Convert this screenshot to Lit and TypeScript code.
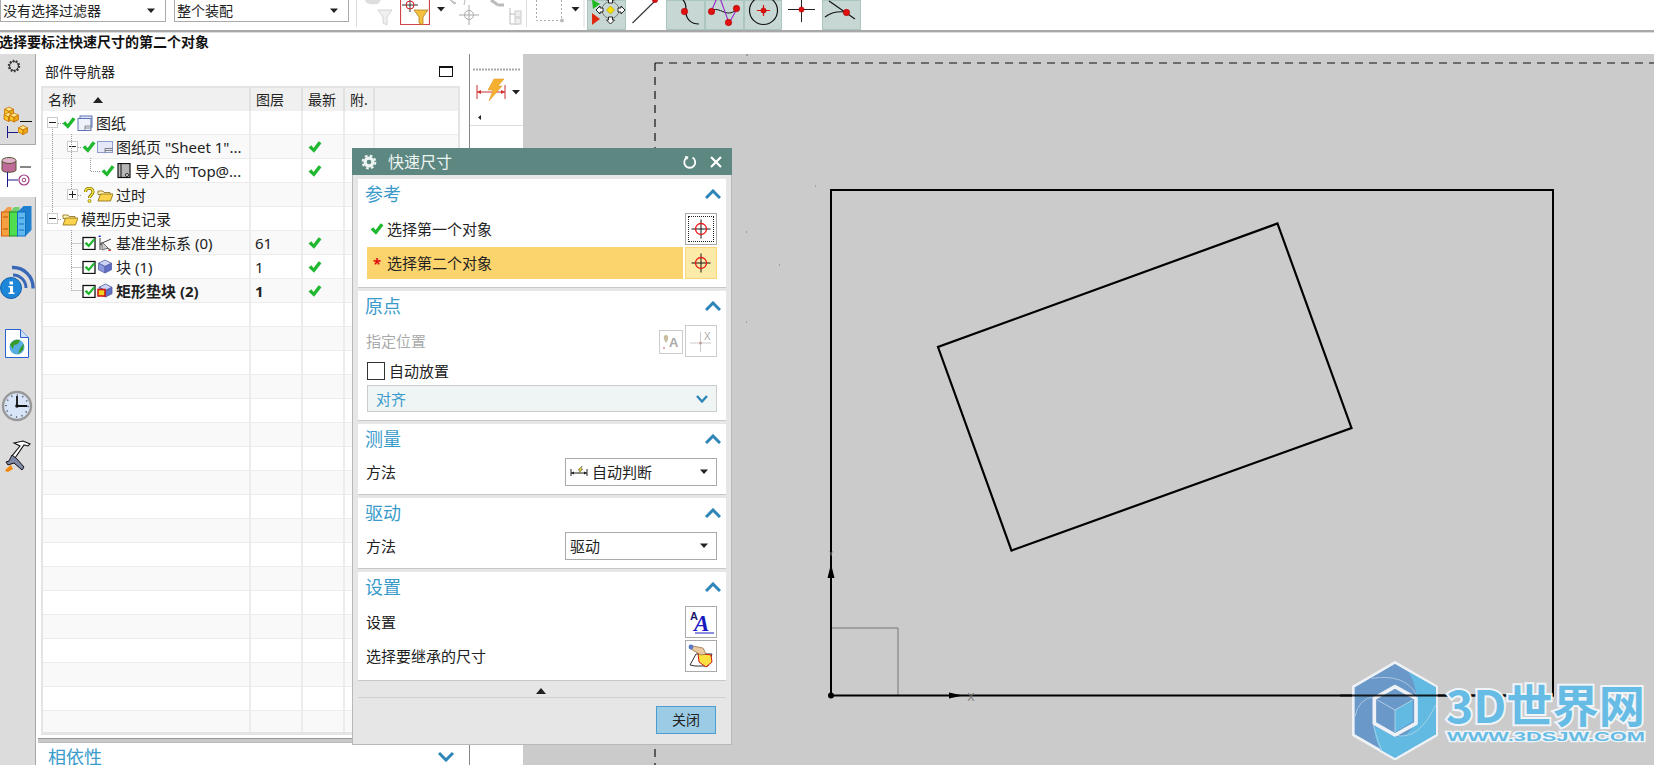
import { LitElement, html, css, svg } from "lit";
import { customElement } from "lit/decorators.js";

const seg = (x0: number, x1: number, content: unknown, on = false) => html`<svg class=${on ? "seg on" : "seg"} width=${x1 - x0} height="30" viewBox="${x0} 0 ${x1 - x0} 30">${content}</svg>`;
const vseg = (y0: number, y1: number, content: unknown) => html`<svg class="vseg" width="35" height=${y1 - y0} viewBox="0 ${y0} 35 ${y1 - y0}">${content}</svg>`;

const tri = (x: number, y: number) => svg`<path d="M${x - 4} ${y - 2}h8l-4 4.500z" fill="#222"/>`;
const dot = (x: number, y: number, r = 3.2) => svg`<circle cx=${x} cy=${y} r=${r} fill="#e01010" stroke="#a00" stroke-width=".6"/>`;
const funnel = (x: number, y: number, a: string, b: string) => svg`<path d="M${x - 7} ${y}h14l-5 7v8l-4-2v-6z" fill=${a} stroke=${b} stroke-width=".8"/>`;
const cube = (x: number, y: number, s: number, t: string, l: string, r: string, e: string) => svg`<g stroke=${e} stroke-width=".8" stroke-linejoin="round"><path d="M${x} ${y - s}l${s} ${s / 2}l${-s} ${s / 2}l${-s} ${-s / 2}z" fill=${t}/><path d="M${x - s} ${y - s / 2}l${s} ${s / 2}v${s}l${-s} ${-s / 2}z" fill=${l}/><path d="M${x + s} ${y - s / 2}l${-s} ${s / 2}v${s}l${s} ${-s / 2}z" fill=${r}/></g>`;
const moveArrow = (x: number, y: number, rot: number) => svg`<path transform="translate(${x} ${y}) rotate(${rot})" d="M0 -5l4 4h-2v3h-4v-3h-2z" fill="#fff" stroke="#111" stroke-width=".9"/>`;

const checkPath = "M.5 7.500l2.800-2.200 2.300 2.700L10.700 1.200 13.500 3.200 6 12.800z";
const checkMark = html`<svg class="g14" width="14" height="14" viewBox="0 0 14 14"><path d=${checkPath} fill="#1fb82f"/></svg>`;
const checkbox = html`<svg class="g14" width="14" height="14" viewBox="0 0 14 14"><rect x="1" y="1.500" width="12" height="12" fill="#fff" stroke="#111" stroke-width="1.300"/><path d="M2.500 7.500l2.200-1.600 2 2.300L11.500 2.500l1.800 1.300-6.500 7.700z" fill="#1fb82f"/></svg>`;
const question = html`<svg class="g14" width="14" height="16" viewBox="0 0 14 16"><path d="M3.500 5c0-5 7.500-5 7.500 0 0 3-3.500 3-3.500 6" fill="none" stroke="#7a6a00" stroke-width="3"/><path d="M3.500 5c0-5 7.500-5 7.500 0 0 3-3.500 3-3.500 6" fill="none" stroke="#f4e23a" stroke-width="1.600"/><circle cx="7.500" cy="14" r="1.600" fill="#f4e23a" stroke="#7a6a00" stroke-width=".6"/></svg>`;
const drawingIcon = html`<svg class="g16" width="16" height="16" viewBox="0 0 16 16"><rect x="3" y="1" width="12" height="11" fill="#dfe5f5" stroke="#5f74b8"/><rect x="1" y="3.500" width="13" height="12" fill="#eef1fa" stroke="#5f74b8"/><path d="M8 15v-4h6M8 13h6" stroke="#777" fill="none" stroke-width=".8"/></svg>`;
const sheetIcon = html`<svg class="g16" width="16" height="16" viewBox="0 0 16 16"><rect x=".5" y="2.500" width="15" height="11" fill="#e5e9f7" stroke="#8d9ccb"/><path d="M8 13.500v-4h7.500M8 11.500h7.500" stroke="#666" fill="none" stroke-width=".8"/></svg>`;
const viewIcon = html`<svg class="g16" width="16" height="16" viewBox="0 0 16 16"><rect x="2" y=".5" width="12" height="14" fill="#b5b5b5" stroke="#111" stroke-width="1.200"/><path d="M5 .5v14" stroke="#111"/><circle cx="11" cy="12" r="1.500" fill="#fff" stroke="#222"/></svg>`;
const folder = html`<svg class="g16" width="16" height="16" viewBox="0 0 16 16"><path d="M1 4h5l1 1.500h6v2H1z" fill="#fff3b0" stroke="#8a6a10" stroke-width=".8"/><path d="M1 14l2.500-7H16l-2.500 7z" fill="#fbd34d" stroke="#8a6a10" stroke-width=".8"/></svg>`;
const csysIcon = html`<svg class="g16" width="16" height="16" viewBox="0 0 16 16"><path d="M3 15V3M3 9l11-5M3 9l11 6" stroke="#444" fill="none"/><path d="M5 7l6 6-6 2z" fill="#ccc" stroke="#555" stroke-width=".8"/><path d="M1 2l2-2 1 2z" fill="#22c"/><path d="M11 15l3 1" stroke="#d22"/></svg>`;
const blockIcon = html`<svg class="g16" width="16" height="16" viewBox="0 0 16 16">${cube(8, 7.500, 6.500, "#cdd4f5", "#8d9ae0", "#5f6fc8", "#5560a0")}</svg>`;
const padIcon = html`<svg class="g16" width="16" height="16" viewBox="0 0 16 16">${cube(8.500, 7.500, 6.500, "#cdd4f5", "#8d9ae0", "#5f6fc8", "#5560a0")}<rect x="1" y="6.500" width="7" height="6.500" fill="#f0d020" stroke="#d01010" stroke-width="1.500"/></svg>`;

const chevUp = html`<svg class="chev" width="16" height="10" viewBox="0 0 16 10"><path d="M1 9L8 2l7 7" fill="none" stroke="#2e86b8" stroke-width="3"/></svg>`;
const chevDown = html`<svg class="chev" width="16" height="10" viewBox="0 0 16 10"><path d="M1 1l7 7 7-7" fill="none" stroke="#2e86b8" stroke-width="3"/></svg>`;
const chevSmall = html`<svg class="chev" width="12" height="8" viewBox="0 0 12 8"><path d="M1 1l5 5.500L11 1" fill="none" stroke="#2e86b8" stroke-width="2.400"/></svg>`;
const target = html`<svg width="22" height="22" viewBox="0 0 22 22"><path d="M1.500 11h19M11 1.500v19" stroke="#111" stroke-width="1"/><circle cx="11" cy="11" r="5.500" fill="none" stroke="#ea1515" stroke-width="1.300"/></svg>`;
const drop = html`<svg class="drop" width="8" height="6" viewBox="0 0 8 6"><path d="M0 .5h8L4 5z" fill="#222"/></svg>`;
const dimIcon = html`<svg width="18" height="14" viewBox="0 0 18 14"><path d="M1 4v7M17 4v7M1 8h16" stroke="#222"/><path d="M1 8l3-1.500v3zM17 8l-3-1.500v3z" fill="#222"/><path d="M8 9l2-4H8l4-4-1 3h2l-5 5z" fill="#e8d020" stroke="#555" stroke-width=".5"/></svg>`;

const rows = [
  { pl: 4, box: "-", marks: [checkMark, drawingIcon], label: "图纸" },
  { pl: 24, box: "-", marks: [checkMark, sheetIcon], label: '图纸页 "Sheet 1"...', fresh: true },
  { pl: 58, marks: [checkMark, viewIcon], label: '导入的 "Top@...', fresh: true },
  { pl: 24, box: "+", marks: [question, folder], label: "过时" },
  { pl: 4, box: "-", marks: [folder], label: "模型历史记录" },
  { pl: 39, marks: [checkbox, csysIcon], label: "基准坐标系 (0)", layer: "61", fresh: true },
  { pl: 39, marks: [checkbox, blockIcon], label: "块 (1)", layer: "1", fresh: true },
  { pl: 39, marks: [checkbox, padIcon], label: "矩形垫块 (2)", layer: "1", fresh: true, bold: true },
];
const blanks = Array.from({ length: 18 });

@customElement("app-root")
export class AppRoot extends LitElement {
  static styles = css`
    :host { display: block; position: relative; width: 1654px; height: 765px; overflow: hidden; background: #fff; color: #222;
      font-family: "Noto Sans", "Noto Sans CJK SC", sans-serif; font-size: 15px; line-height: 20px; }
    svg { display: block; flex: none; }
    .toolbar { display: flex; height: 30px; border-bottom: 2px solid #a8a8a8; box-shadow: 0 1px 0 #ddd; }
    .picker { width: 166px; height: 22px; box-sizing: border-box; border: 1px solid #aaa; border-top: 0; display: flex; align-items: center; justify-content: space-between; padding: 0 10px 0 2px; font-size: 14px; }
    .picker + .picker { width: 175px; margin: 0 7px 0 8px; }
    .seg.on { background: #c7d8d4; box-shadow: inset 0 0 0 1px #aac6bf; }
    .status { height: 22px; font-size: 14px; line-height: 20px; font-weight: 700; white-space: nowrap; text-indent: -1px; color: #111; }
    .main { display: flex; height: 711px; }
    .tabs { width: 35px; flex: none; background: #dcdcdc; border-right: 1px solid #a8a8a8; display: flex; flex-direction: column; }
    .tab0 { border-bottom: 1px solid #aaa; }
    .tab1 { background: #fff; margin-right: -1px; }
    .nav { width: 433px; flex: none; display: flex; flex-direction: column; border-right: 1px solid #888; overflow: hidden; }
    .navhead { height: 32px; flex: none; display: flex; align-items: center; justify-content: space-between; padding: 3px 16px 0 9px; box-sizing: border-box; font-size: 14px; }
    .maxi { width: 14px; height: 11px; border: 1px solid #111; border-top-width: 2px; box-sizing: border-box; }
    .table { position: relative; flex: none; margin: 0 9px 0 5px; border: 2px solid #e4e4e4; border-bottom-width: 3px; height: 649px; overflow: hidden; box-sizing: border-box; }
    .lines { position: absolute; left: 0; top: 0; pointer-events: none; }
    .row { display: grid; grid-template-columns: 208px 52px 42px 30px 1fr; height: 24px; box-sizing: border-box; border-bottom: 1px solid #ececec; }
    .row:nth-child(odd) { background: #f9f9f9; }
    .row.head { background: #f0f0f0; border-bottom: 0; font-size: 14px; height: 23px; }
    .row > div { border-right: 2px solid #ececec; display: flex; align-items: center; white-space: nowrap; overflow: hidden; }
    .row.head > div { border-right-color: #e0e0e0; padding-left: 5px; }
    .row > div:last-child { border-right: 0; }
    .row.bold { font-weight: 700; }
    .layer { padding-left: 4px; }
    .fresh { padding-left: 5px; }
    .sort { margin-left: 17px; }
    .box { width: 11px; height: 11px; box-sizing: border-box; border: 1px solid #ccc; background: #fff; position: relative; margin-right: 4px; flex: none; }
    .box::before { content: ""; position: absolute; left: 1px; right: 1px; top: 4px; height: 1px; background: #222; }
    .box.plus::after { content: ""; position: absolute; top: 1px; bottom: 1px; left: 4px; width: 1px; background: #222; }
    .g14 { margin-right: 1px; }
    .g16 { margin-right: 3px; }
    .splitter { height: 5px; flex: none; margin-left: 2px; background: #c8c8c8; border-top: 1px solid #999; border-bottom: 1px solid #bbb; box-sizing: border-box; margin-top: 3px; }
    .deps { display: flex; flex: none; justify-content: space-between; align-items: center; padding: 0 15px 0 12px; font-size: 18px; color: #3a9bcb; height: 28px; }
    .mini { width: 53px; flex: none; height: 72px; border-bottom: 1px solid #ddd; box-sizing: border-box; padding: 14px 3px 0; }
    .canvas { flex: 1; background: #cbcbcb; }
    .dialog { position: absolute; left: 352px; top: 148px; width: 380px; height: 597px; box-sizing: border-box; background: #e6e6e6; border: 1px solid #b8b8b8; border-top: 0; display: flex; flex-direction: column; }
    .title { height: 27px; flex: none; margin: 0 -1px; background: #5d8781; color: #eef4f2; display: flex; align-items: center; font-size: 16px; padding: 0 9px; gap: 11px; }
    .title span { flex: 1; }
    .body { display: flex; flex-direction: column; gap: 3px; padding: 4px 5px 0 5px; }
    .sec { background: #fff; border-bottom: 1px solid #c8c8c8; padding: 0 9px; display: flex; flex-direction: column; }
    .sh { height: 34px; flex: none; display: flex; align-items: center; justify-content: space-between; font-size: 18px; color: #3a9bcb; padding: 0 0 4px; box-sizing: border-box; margin-left: -2px; }
    .sh .chev { margin-right: -4px; }
    .line { display: flex; align-items: center; justify-content: space-between; height: 32px; flex: none; }
    .line + .line { margin-top: 2px; }
    .line > span { margin-left: -1px; }
    .lab { display: flex; align-items: center; }
    .sel { width: 32px; height: 32px; box-sizing: border-box; border: 1px solid #aaa; display: flex; align-items: center; justify-content: center; background: #fff; flex: none; }
    .sel.focus { position: relative; }
    .sel.focus::after { content: ""; position: absolute; inset: 2px; border: 1px dotted #222; }
    .pick { background: #fcd46e; padding-right: 2px; height: 32px; }
    .pick .lab { flex: 1; height: 32px; }
    .pick .sel { margin-right: -2px; background: #fbeaa8; border-color: #fbd678; box-shadow: -2px 0 0 #fff; }
    .star { color: #e01010; width: 20px; text-align: center; font-weight: 700; }
    .tick { width: 20px; display: flex; justify-content: center; }
    .dim { color: #aaa; }
    .btns { display: flex; gap: 2px; align-items: flex-end; }
    .sel.faint { border-color: #ccc; }
    .sel.small { width: 24px; height: 24px; margin-bottom: 3px; }
    .auto { display: flex; align-items: center; gap: 4px; height: 18px; margin-top: 5px; font-size: 15px; }
    .cb { width: 18px; height: 18px; border: 1px solid #333; box-sizing: border-box; }
    .align { height: 27px; margin: 5px 0 8px; border: 1px solid #ccc; background: #eff5f5; color: #3a9bcb; display: flex; align-items: center; justify-content: space-between; padding: 0 8px; box-sizing: border-box; flex: none; }
    .meas { height: 28px; margin-bottom: 8px; }
    .combo { width: 152px; height: 28px; border: 1px solid #aaa; box-sizing: border-box; display: flex; align-items: center; gap: 4px; padding: 0 8px 0 4px; }
    .combo span { flex: 1; }
    .last { margin-bottom: 8px; }
    .more { height: 17px; display: flex; align-items: center; justify-content: center; margin: 0 5px; border-bottom: 1px solid #d0d0d0; flex: none; padding: 3px 2px 0 0; box-sizing: border-box; }
    .foot { display: flex; justify-content: flex-end; padding: 8px 15px 0; }
    .close { width: 60px; height: 28px; box-sizing: border-box; background: #9ccbe5; border: 1px solid #4b9cd0; display: flex; align-items: center; justify-content: center; font-size: 14px; }
  `;

  private gear(c: string, hole: string) {
    return html`<svg width="16" height="16" viewBox="0 0 16 16"><circle cx="8" cy="8" r="6.400" fill="none" stroke=${c} stroke-width="2" stroke-dasharray="2.700 2.330"/><circle cx="8" cy="8" r="5.500" fill=${c}/><circle cx="8" cy="8" r="2.300" fill=${hole}/></svg>`;
  }

  private toolbar() {
    return html`<div class="toolbar">
      <div class="picker">没有选择过滤器${drop}</div>
      <div class="picker">整个装配${drop}</div>
      ${seg(356, 400, svg`<path d="M356.500 0v27" stroke="#ddd"/><path d="M365 0c1 4 5 5 13 4l3-4z" fill="#dedede"/>${funnel(385, 10, "#f0f0f0", "#ccc")}`)}
      ${seg(400, 430, svg`<path d="M400.500 0v24.500h29V0" fill="#fff" stroke="#d2434a" stroke-width="1.200"/><path d="M402 5h16M410 0v12" stroke="#333"/><circle cx="410" cy="5" r="4" fill="none" stroke="#d02020"/>${funnel(421, 10, "#f4c040", "#b08020")}`)}
      ${seg(430, 526, svg`${tri(441, 9)}<path d="M450 0l6 3-2 1zM465 0l-1 5" stroke="#bbb" fill="#ccc"/><path d="M459 15h20M469 5v20" stroke="#aaa"/><circle cx="469" cy="15" r="4.500" fill="none" stroke="#aaa"/><path d="M491 0l7 5M498 5l6 0" stroke="#bbb" stroke-width="3"/><path d="M510 8v16h8M510 14h5" stroke="#bbb" fill="none"/><rect x="515" y="11" width="6" height="6" fill="#eee" stroke="#ccc"/><rect x="515" y="18" width="6" height="6" fill="#eee" stroke="#ccc"/>`)}
      ${seg(526, 587, svg`<path d="M526.500 0v27M584 0v27" stroke="#ddd"/><path d="M536.500 0v20.500h25V0" fill="none" stroke="#aaa" stroke-dasharray="2 2"/><circle cx="562" cy="20.500" r="2" fill="#bbb"/>${tri(575.500, 9)}`)}
      ${seg(587, 626, svg`<path d="M592 0h1l7 4-7 5z" fill="#22b822"/><path d="M592 13l8 6-8 6z" fill="#e02a10"/><circle cx="610.500" cy="10" r="8.500" fill="none" stroke="#777"/>${moveArrow(610.500, 1, 0)}${moveArrow(610.500, 19, 180)}${moveArrow(601, 10, 270)}${moveArrow(620, 10, 90)}<path d="M610.500 6l4 4-4 4-4-4z" fill="#f6e000" stroke="#b09000" stroke-width=".6"/>`, true)}
      ${seg(626, 666, svg`<path d="M632.500 23L655 1" stroke="#333" stroke-width="1.100"/>${dot(655, 0, 2.600)}`)}
      ${seg(666, 705, svg`<path d="M683 0c2 2 3 5 3 9v3c0 7 5 12 13 12" fill="none" stroke="#111" stroke-width="1.200"/>${dot(684.500, 11.500)}`, true)}
      ${seg(705, 744, svg`<path d="M711 11c4-3 8-1 13 1s9 1 13-3" fill="none" stroke="#111"/><path d="M711 12l6-14h3l9 25 8-14" fill="none" stroke="#9a28c8" stroke-width="1.100"/>${dot(711.500, 11.500)}${dot(736.500, 8.500)}${dot(728.500, 22.500)}`, true)}
      ${seg(744, 782, svg`<circle cx="763.500" cy="10.500" r="14" fill="none" stroke="#111" stroke-width="1.200"/><path d="M757 10.500h13M763.500 5v11" stroke="#e01010" stroke-width="1.200"/>${dot(763.500, 10.500, 2.600)}`, true)}
      ${seg(782, 822, svg`<path d="M788 9.500h27M801.500 0v22" stroke="#222"/>${dot(801.500, 9.500, 2.600)}`)}
      ${seg(822, 861, svg`<path d="M829 1l26 18" stroke="#111" stroke-width="1.100" fill="none"/><path d="M825 17c5-4 12-6 21-5" fill="none" stroke="#111" stroke-width="1.100"/>${dot(846.500, 12.500)}`, true)}
    </div>`;
  }

  private tabs() {
    const y = ["#fde68a", "#f6c828", "#e8a818", "#c87000"] as const;
    return html`<div class="tabs">
      <div class="tab0">${vseg(54, 90, svg`<g transform="translate(6 58)"><circle cx="8" cy="8" r="5" fill="none" stroke="#333" stroke-width="2.400" stroke-dasharray="1.600 1.500"/><circle cx="8" cy="8" r="4.500" fill="none" stroke="#333" stroke-width="1"/></g>`)}${vseg(90, 144, svg`${cube(9, 111.500, 4.500, ...y)}${cube(8.500, 117, 4.500, ...y)}${cube(14, 117.500, 4.500, ...y)}${cube(23, 130, 4.500, ...y)}<path d="M20 121.500h12" stroke="#111"/><path d="M7.500 126v12M7.500 132.500H18" stroke="#1a1a8c" fill="none"/>`)}</div>
      <div class="tab1">${vseg(145, 197, svg`<path d="M2 161v9c0 3 14 3 14 0v-9" fill="#c06a9a" stroke="#553"/><ellipse cx="9" cy="160.500" rx="7" ry="3" fill="#e0b0cc" stroke="#553"/><path d="M20 167h11" stroke="#111"/><path d="M7.500 172v15M7.500 180H18" stroke="#1a1a8c" fill="none"/><circle cx="24" cy="180" r="5" fill="#fff" stroke="#9a3a80" stroke-width="1.200"/><circle cx="24" cy="180" r="1.800" fill="none" stroke="#9a3a80"/>`)}</div>
      ${vseg(198, 260, svg`<path d="M1.500 214l6-6h4v5z" fill="#f0a050"/><rect x="1.500" y="213" width="8" height="24" fill="#f5a040" stroke="#d06010"/><path d="M3 218h5M3 230h5" stroke="#c05010"/><path d="M9.500 213l5-5h5v5z" fill="#70d070"/><rect x="9.500" y="213" width="8" height="24" fill="#50dd50" stroke="#209020"/><path d="M17.500 213l6-6h8v24l-6 6z" fill="#2080d0"/><rect x="17.500" y="213" width="8" height="24" fill="#60b8f0" stroke="#1070c0"/><path d="M19 219h5M19 225h5M19 231h5" stroke="#1070c0"/>`)}
      ${vseg(260, 323, svg`<path d="M12 268.500a20 20 0 0 1 21 21" fill="none" stroke="#3a68b8" stroke-width="3.400"/><path d="M13 276a13 13 0 0 1 13 13" fill="none" stroke="#3a68b8" stroke-width="3"/><circle cx="11" cy="289" r="10.500" fill="#1d86d8" stroke="#1460a8"/><path d="M8.500 287h4.500v6.500h1.500v1.500h-6v-1.500h1.500v-5h-1.500z" fill="#fff"/><rect x="9.500" y="282.500" width="3.500" height="3" fill="#fff"/>`)}
      ${vseg(323, 384, svg`<path d="M5.500 330.500h15l8 8v20h-23z" fill="#fff" stroke="#2a62d0"/><path d="M20.500 330.500v8h8" fill="#cfe0fa" stroke="#2a62d0"/><circle cx="17" cy="348" r="7.500" fill="#58aee0"/><path d="M10 346c2-5 7-6 10-5l-2 4-4 1-1 4zM24 345l-1 6-5 4c1-4 3-8 6-10z" fill="#3a9a28"/>`)}
      ${vseg(384, 434, svg`<circle cx="17" cy="407" r="14" fill="#d8e4f8" stroke="#999" stroke-width="2.400"/><path d="M17 407v-10M17 407h10" stroke="#111" stroke-width="1.800"/><circle cx="17" cy="407" r="1.800" fill="#111"/><circle cx="17" cy="407" r="11" fill="none" stroke="#556" stroke-width="1.600" stroke-dasharray="1.200 4.500"/>`)}
      ${vseg(434, 480, svg`<path d="M14 444l9-2 7 3-2 2-4-1-9 13-3-2 8-10z" fill="#fff" stroke="#111" stroke-width="1.100"/><path d="M12 456l5 4 7 8-2 3-8-7-6 2-2-3 3-1z" fill="#8088a8" stroke="#111"/><path d="M5 472c1-3 4-4 6-6l2 4-5 3z" fill="#f58a10"/>`)}
    </div>`;
  }

  private tree() {
    return html`<div class="table">
      <div class="row head"><div>名称<svg class="sort" width="10" height="6" viewBox="0 0 10 6"><path d="M0 6h10L5 0z" fill="#222"/></svg></div><div>图层</div><div>最新</div><div>附.</div><div></div></div>
      ${rows.map((r) => html`<div class="row ${r.bold ? "bold" : ""}">
        <div style="padding-left:${r.pl}px">${r.box ? html`<span class="box ${r.box === "+" ? "plus" : ""}"></span>` : ""}${r.marks}${r.label}</div>
        <div class="layer">${r.layer ?? ""}</div><div class="fresh">${r.fresh ? checkMark : ""}</div><div></div><div></div></div>`)}
      ${blanks.map(() => html`<div class="row"><div></div><div></div><div></div><div></div><div></div></div>`)}
      <svg class="lines" width="414" height="300" viewBox="43 88 414 300"><g stroke="#999" stroke-dasharray="1 1" fill="none"><path d="M52.500 129v84M58 123.500h5M58 219.500h4"/><path d="M71.500 134v56M78 147.500h4M78 195.500h4M90.500 158v13.500H101"/><path d="M71.500 230v60.500M71.500 243.500H82M71.500 267.500H82M71.500 290.500H82"/></g></svg>
    </div>`;
  }

  private canvas() {
    return html`<div class="canvas"><svg width="1131" height="711" viewBox="523 54 1131 711">
      <path d="M655 63H1654M655 63V765" stroke="#111" stroke-width="1.200" stroke-dasharray="8 6" fill="none"/>
      <path d="M747 54v2M746 232h1M779 265h1M815 186h1M746 322h1" stroke="#777"/>
      <path d="M831 628h67v67.500" fill="none" stroke="#777" stroke-width="1"/>
      <path d="M831 695.500V190H1553V695.500H831" fill="none" stroke="#000" stroke-width="2"/>
      <path d="M1277.500 223.500L1351.500 428 1011.500 550.500 938 347z" fill="none" stroke="#000" stroke-width="2.200"/>
      <path d="M831 564l-3.500 14h7zM949 692.500l14 3-14 3z" fill="#000"/><circle cx="831" cy="695.500" r="3" fill="#000"/>
      <text x="971" y="701" font-family="Liberation Sans" font-size="11" fill="#777" text-anchor="middle">X</text>
      <text x="831" y="556" font-family="Liberation Sans" font-size="7" fill="#888" text-anchor="middle">Y</text>
      <g transform="translate(1345 655) scale(.3333)">
        <path d="M150 22L275 95V240L150 312 25 240V95z" fill="#6a98c8" stroke="#eef2f6" stroke-width="8" stroke-linejoin="round"/>
        <path d="M190 50L273 97V238L150 309 106 284Q88 250 86 212L150 245Q205 245 215 180 222 100 190 50z" fill="#62b9e2"/>
        <path d="M80 70Q180 55 215 120M30 185Q40 130 90 125M85 210Q100 265 110 285M150 240Q220 260 272 150" fill="none" stroke="#c9dcec" stroke-width="2"/>
        <path d="M150 95L213 130V205L150 240 88 205V130z" fill="#6a98c8" stroke="#eef2f6" stroke-width="11" stroke-linejoin="round"/>
        <path d="M150 165L203 135V200L150 232z" fill="#62b9e2"/>
        <path d="M97 135L150 165 203 135M150 165V232" fill="none" stroke="#d5e2ee" stroke-width="2"/>
      </g>
      <path d="M1340 695.500H1553V650" fill="none" stroke="#000" stroke-width="2" opacity=".85"/>
      <text x="1446" y="723" font-family="Noto Sans CJK SC, sans-serif" font-weight="700" font-size="45" fill="#66bce4" stroke="#f0f4f8" stroke-width="4" paint-order="stroke" textLength="199" lengthAdjust="spacingAndGlyphs">3D世界网</text>
      <text x="1447" y="741" font-family="Liberation Sans, sans-serif" font-weight="700" font-size="12" fill="#66bce4" stroke="#f0f4f8" stroke-width="2.400" paint-order="stroke" textLength="198" lengthAdjust="spacingAndGlyphs">WWW.3DSJW.COM</text>
    </svg></div>`;
  }

  private dialog() {
    return html`<div class="dialog">
      <div class="title">${this.gear("#eef4f2", "#5d8781")}<span>快速尺寸</span>
        <svg width="16" height="16" viewBox="0 0 16 16"><path d="M5 3.500a5.500 5.500 0 1 0 5.500 0" fill="none" stroke="#fff" stroke-width="1.800"/><path d="M2.500 2l4 .5-1.500 3.500z" fill="#fff"/></svg>
        <svg width="14" height="14" viewBox="0 0 14 14"><path d="M2 2l10 10M12 2L2 12" stroke="#fff" stroke-width="2.200"/></svg></div>
      <div class="body">
        <div class="sec s1">
          <div class="sh">参考${chevUp}</div>
          <div class="line"><div class="lab"><span class="tick">${checkMark}</span>选择第一个对象</div><div class="sel focus">${target}</div></div>
          <div class="line pick"><div class="lab"><span class="star">*</span>选择第二个对象</div><div class="sel">${target}</div></div>
          <div class="last"></div>
        </div>
        <div class="sec">
          <div class="sh">原点${chevUp}</div>
          <div class="line"><span class="dim">指定位置</span><div class="btns">
            <div class="sel faint small"><svg width="20" height="18" viewBox="0 0 20 18"><text x="8" y="14" font-family="Liberation Sans" font-weight="700" font-size="13" fill="#aaa">A</text><path d="M5 2c-3 0-3 4 0 8 3-4 3-8 0-8z" fill="#c8bda0"/><circle cx="3" cy="15" r="1" fill="#d89090"/></svg></div>
            <div class="sel faint"><svg width="24" height="24" viewBox="0 0 24 24"><path d="M1 14h21M11.500 3v20" stroke="#ccc"/><circle cx="11.500" cy="14" r="1.500" fill="#c8a0a0"/><text x="15" y="11" font-family="Liberation Sans" font-size="10" fill="#aaa">X</text></svg></div>
          </div></div>
          <div class="auto"><span class="cb"></span>自动放置</div>
          <div class="align">对齐${chevSmall}</div>
        </div>
        <div class="sec">
          <div class="sh">测量${chevUp}</div>
          <div class="line meas"><span>方法</span><div class="combo">${dimIcon}<span>自动判断</span>${drop}</div></div>
        </div>
        <div class="sec">
          <div class="sh">驱动${chevUp}</div>
          <div class="line meas"><span>方法</span><div class="combo"><span>驱动</span>${drop}</div></div>
        </div>
        <div class="sec">
          <div class="sh">设置${chevUp}</div>
          <div class="line"><span>设置</span><div class="sel"><svg width="28" height="28" viewBox="0 0 28 28"><text x="3" y="12" font-family="Liberation Sans" font-weight="700" font-size="11" fill="#1a1a70">A</text><text x="7" y="23" font-family="Liberation Serif" font-weight="700" font-style="italic" font-size="23" fill="#1818c0">A</text><path d="M8 25h19" stroke="#1818c0"/></svg></div></div>
          <div class="line last"><span>选择要继承的尺寸</span><div class="sel"><svg width="26" height="26" viewBox="0 0 26 26"><path d="M2 22l6-11h16l-4 12H7z" fill="#fff" stroke="#333"/><path d="M10 10l13 2 1 7-6 5-7-5z" fill="#fbe040" stroke="#d01818" stroke-width="1"/><path d="M1 5l12 7 5-1-3-6-10-2z" fill="#eac8a0" stroke="#8a6a40" stroke-width=".7"/><circle cx="3" cy="4" r="2.400" fill="#5a78c8"/></svg></div></div>
        </div>
      </div>
      <div class="more"><svg width="10" height="6" viewBox="0 0 10 6"><path d="M0 6h10L5 0z" fill="#222"/></svg></div>
      <div class="foot"><div class="close">关闭</div></div>
    </div>`;
  }

  render() {
    return html`${this.toolbar()}
      <div class="status">选择要标注快速尺寸的第二个对象</div>
      <div class="main">
        ${this.tabs()}
        <div class="nav">
          <div class="navhead">部件导航器<span class="maxi"></span></div>
          ${this.tree()}
          <div class="splitter"></div>
          <div class="deps">相依性${chevDown}</div>
        </div>
        <div class="mini"><svg width="47" height="52" viewBox="473 68 47 52"><path d="M473 69.500h47" stroke="#aaa" stroke-dasharray="2 1" stroke-width="2"/><path d="M477 85v14M505 85v14M477 92h28" stroke="#cc3030" fill="none"/><path d="M477 92l4-2v4zM505 92l-4-2v4z" fill="#cc3030"/><path d="M494 79h10l-6 7h4l-13 15 4-11h-5z" fill="#f6b030" stroke="#d89020" stroke-width=".5"/><path d="M512 90h8l-4 4.500z" fill="#222"/><path d="M481 115v5l-3-2.500z" fill="#222"/></svg></div>
        ${this.canvas()}
      </div>
      ${this.dialog()}`;
  }
}
